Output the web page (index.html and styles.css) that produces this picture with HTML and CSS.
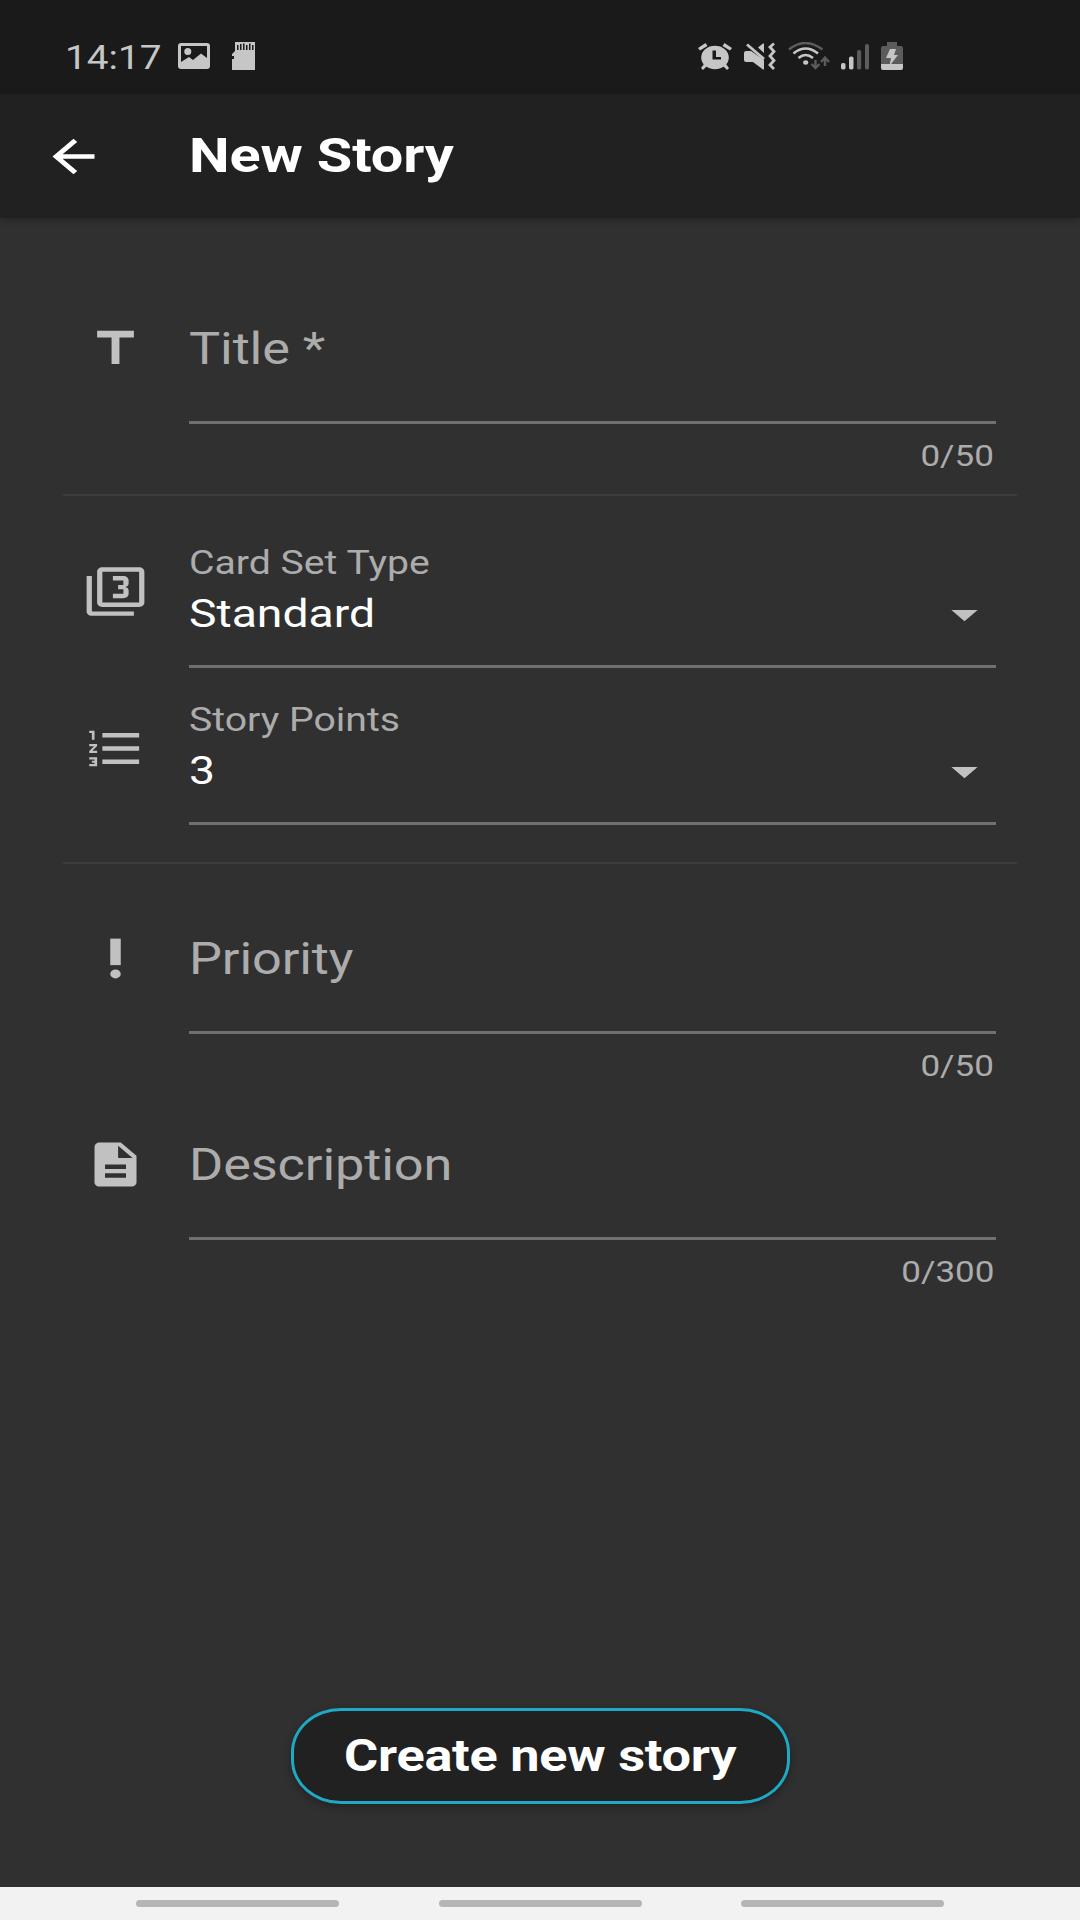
FILE: index.html
```html
<!DOCTYPE html>
<html lang="en">
<head>
    <meta charset="utf-8">
    <title>New Story</title>
    <link rel="stylesheet" href="styles.css">
</head>
<body>
    <div class="status-bar">
        <div class="status-left">
            <span class="clock">14:17</span>
            <svg class="picture" width="32" height="26" viewBox="0 0 32 26">
                <path fill-rule="evenodd" d="M3 0h26q3 0 3 3v20q0 3-3 3H3q-3 0-3-3V3q0-3 3-3zM3 3v16l8-5 4 3 8-6.500 6 4.500V3z"/>
                <circle cx="9.800" cy="8.500" r="3.500"/>
            </svg>
            <svg width="23" height="28" viewBox="0 0 23 28">
                <path d="M3 0h20v28H0V17h2v-3H0v-2l3-3z"/>
                <path class="cut" d="M5 3h1.500v5H5zM8 2h1.500v6H8zM11 1.500h1.500V8H11zM14 3h1.500v5H14zM17 1.500h1.500V8H17zM20 3h1.500v5H20z"/>
            </svg>
        </div>
        <div class="status-right">
            <svg width="34" height="28" viewBox="0 0 34 28">
                <ellipse cx="17" cy="15.500" rx="13.800" ry="11.800"/>
                <path d="M7.500 1l2 3L2 8.500 0 6zM26.500 1l-2 3L32 8.500 34 6zM6 22l3 2-4 4-2-2zM28 22l-3 2 4 4 2-2z"/>
                <path class="cut" d="M14.500 8.500H18V15h5v2.500h-8.500z"/>
            </svg>
            <svg width="32" height="28" viewBox="0 0 32 28">
                <path d="M2 9h5l13 9v9.500h-1L9 20H2q-2 0-2-2v-7q0-2 2-2z"/>
                <path d="M14 5.500L19 1.500h1V11z"/>
                <path class="line" stroke-width="2.800" d="M3 2.500L20 17"/>
                <path class="line" stroke-width="2.800" d="M30 1.500l-4 3.500 4 4.500-4 4.500 4 4.500-4 4.500 4 4"/>
            </svg>
            <svg width="42" height="28" viewBox="0 0 42 28">
                <path class="line dim" stroke-width="2.400" d="M1 7.500Q17-5.500 34.500 7.500"/>
                <path class="line" stroke-width="2.600" d="M5.500 11.500Q17.500 1.500 30 11.500"/>
                <path class="line" stroke-width="2.600" d="M10.500 16Q17.500 10 25 16"/>
                <ellipse cx="17.700" cy="20.500" rx="2.600" ry="2.200"/>
                <path class="line dim" stroke-width="2.400" d="M27.500 18v8M23.500 22l4 4 4-4M37 24v-8M33 20l4-4.500 4 4.500"/>
            </svg>
            <svg width="28" height="28" viewBox="0 0 28 28">
                <rect x="0" y="21" width="4.500" height="6.500" rx="1.800"/>
                <rect x="8" y="14.500" width="4.500" height="13" rx="1.800"/>
                <rect class="dim" x="16" y="8" width="4.200" height="19.500" rx="1.800"/>
                <rect class="dim" x="24" y="2" width="4" height="25.500" rx="1.800"/>
            </svg>
            <svg width="22" height="28" viewBox="0 0 22 28">
                <path class="dim" d="M6 0h10v4h4q2 0 2 2v16H0V6q0-2 2-2h4z"/>
                <path d="M0 22h22v4q0 2-2 2H2q-2 0-2-2z"/>
                <path d="M9 7h6l-2 6h4L8.500 24l1.500-8H5z"/>
            </svg>
        </div>
    </div>

    <div class="app-bar">
        <svg class="icon back" viewBox="0 0 24 24" preserveAspectRatio="none"><path d="M20 11H7.830l5.590-5.590L12 4l-8 8 8 8 1.410-1.410L7.830 13H20v-2z"/></svg>
        <h1><span class="wide">New Story</span></h1>
    </div>

    <div class="form">
        <div class="row">
            <svg class="icon" viewBox="0 0 24 24" preserveAspectRatio="none"><path d="M5 4v3h5.500v12h3V7H19V4z"/></svg>
            <div class="input"><span class="wide">Title *</span></div>
            <div class="counter"><span class="wide">0/50</span></div>
        </div>

        <hr class="first">

        <div class="row">
            <svg class="icon" viewBox="0 0 24 24" preserveAspectRatio="none"><path d="M21 1H7c-1.100 0-2 .9-2 2v14c0 1.100.9 2 2 2h14c1.100 0 2-.9 2-2V3c0-1.100-.9-2-2-2zm0 16H7V3h14v14zM3 5H1v16c0 1.100.9 2 2 2h16v-2H3V5zm14 8v-1.500c0-.830-.670-1.500-1.500-1.500.830 0 1.500-.670 1.500-1.500V7c0-1.110-.9-2-2-2h-4v2h4v2h-2v2h2v2h-4v2h4c1.100 0 2-.890 2-2z"/></svg>
            <div class="select">
                <div class="label"><span class="wide">Card Set Type</span></div>
                <div class="value">
                    <span class="wide">Standard</span>
                    <svg class="icon" viewBox="0 0 24 24" preserveAspectRatio="none"><path d="M7 10l5 5 5-5z"/></svg>
                </div>
            </div>
        </div>

        <div class="row points">
            <svg class="icon" viewBox="0 0 24 24" preserveAspectRatio="none"><path d="M2 17h2v.5H3v1h1v.5H2v1h3v-4H2v1zm1-9h1V4H2v1h1v3zm-1 3h1.800L2 13.100v.9h3v-1H3.200L5 10.900V10H2v1zm5-6v2h14V5H7zm0 14h14v-2H7v2zm0-6h14v-2H7v2z"/></svg>
            <div class="select">
                <div class="label"><span class="wide">Story Points</span></div>
                <div class="value">
                    <span class="wide">3</span>
                    <svg class="icon" viewBox="0 0 24 24" preserveAspectRatio="none"><path d="M7 10l5 5 5-5z"/></svg>
                </div>
            </div>
        </div>

        <hr class="second">

        <div class="row">
            <svg class="icon" viewBox="0 0 24 24" preserveAspectRatio="none"><circle cx="12" cy="19" r="2"/><path d="M10 3h4v12h-4z"/></svg>
            <div class="input"><span class="wide">Priority</span></div>
            <div class="counter"><span class="wide">0/50</span></div>
        </div>

        <div class="row">
            <svg class="icon" viewBox="0 0 24 24" preserveAspectRatio="none"><path d="M14 2H6c-1.100 0-1.990.9-1.990 2L4 20c0 1.100.890 2 1.990 2H18c1.100 0 2-.9 2-2V8l-6-6zm2 16H8v-2h8v2zm0-4H8v-2h8v2zm-3-5V3.500L18.500 9H13z"/></svg>
            <div class="input"><span class="wide">Description</span></div>
            <div class="counter"><span class="wide">0/300</span></div>
        </div>
    </div>

    <button type="submit"><span class="wide">Create new story</span></button>

    <div class="nav-bar">
        <div class="pill"></div>
        <div class="pill"></div>
        <div class="pill"></div>
    </div>
</body>
</html>
```
FILE: styles.css
```css
/* Set body font and background color */
body {
    margin: 0;
    height: 1920px;
    overflow: hidden;
    display: flex;
    flex-direction: column;
    font-family: Roboto, sans-serif;
    background-color: #303030;
    color: #fff;
}

/* Text is drawn wider than its natural shape */
.wide {
    display: inline-block;
    white-space: nowrap;
    transform: scaleX(1.1875);
    transform-origin: left center;
}

/* Set status bar styles */
.status-bar {
    box-sizing: border-box;
    height: 94px;
    padding: 18px 177px 0 65px;
    display: flex;
    justify-content: space-between;
    align-items: center;
    background-color: #1a1a1a;
    color: #c6c6c6;
    fill: #c6c6c6;
}

.status-left,
.status-right {
    display: flex;
    align-items: center;
}

.status-left {
    gap: 22px;
}

.status-right {
    gap: 11.75px;
}

.clock {
    width: 91px;
    font-size: 34px;
    line-height: 42px;
    padding-top: 1px;
    white-space: nowrap;
    transform: scaleX(1.14);
    transform-origin: left center;
}

.status-bar .cut {
    fill: #1a1a1a;
}

.status-bar .dim {
    fill: #5c5c5c;
}

.status-bar .line {
    fill: none;
    stroke: #c6c6c6;
}

.status-bar .line.dim {
    stroke: #5c5c5c;
}

/* Set app bar styles */
.app-bar {
    height: 124px;
    display: flex;
    align-items: center;
    background-color: #212121;
    box-shadow: 0 2px 6px rgba(0, 0, 0, 0.25);
}

.app-bar h1 {
    margin: 0;
    font-size: 48.5px;
    font-weight: bold;
    line-height: 60px;
    letter-spacing: -0.1px;
}

.icon {
    width: 63px;
    height: 53px;
    fill: #c1c1c1;
}

.icon.back {
    margin: 0 84px 0 42px;
    fill: #fff;
}

/* Set form styles */
.form {
    flex: 1;
    padding: 58px 63px 0;
}

.row {
    display: grid;
    grid-template-columns: 126px 807px;
    align-items: center;
}

.row > .icon {
    margin: 0 0 3px 21px;
}

.input {
    height: 145px;
    display: flex;
    align-items: center;
    border-bottom: 3px solid #707070;
    font-size: 44px;
    letter-spacing: -0.1px;
    color: #acacac;
}

.counter {
    grid-column: 2;
    padding: 12px 2px 6px 0;
    font-size: 29.5px;
    line-height: 40px;
    text-align: right;
    color: #acacac;
}

.counter .wide {
    transform-origin: right center;
}

.select {
    padding: 20px 0 25px;
    border-bottom: 3px solid #707070;
}

.label {
    font-size: 33px;
    line-height: 50px;
    color: #acacac;
}

.value {
    height: 52px;
    display: flex;
    justify-content: space-between;
    align-items: center;
    font-size: 39px;
}

.points {
    margin-top: 7px;
}

hr {
    height: 2px;
    border: none;
    background-color: #3c3c3c;
}

hr.first {
    margin: 12px 0 22px;
}

hr.second {
    margin: 37px 0 22px;
}

/* Set submit button styles */
button[type="submit"] {
    align-self: center;
    width: 499px;
    height: 96px;
    margin-bottom: 83px;
    padding: 0;
    border: 3px solid #1ea9c4;
    border-radius: 50px / 44px;
    background-color: #212121;
    box-shadow: 0 3px 8px rgba(0, 0, 0, 0.3);
    color: #fff;
    font-family: inherit;
    font-size: 44px;
    font-weight: bold;
    letter-spacing: -0.2px;
}

button .wide {
    transform-origin: center;
}

/* Set bottom navigation styles */
.nav-bar {
    height: 33px;
    display: flex;
    justify-content: center;
    align-items: center;
    gap: 99.5px;
    background-color: #f2f2f2;
}

.pill {
    width: 203px;
    height: 7px;
    border-radius: 4px;
    background-color: #b5b5b5;
}
```
